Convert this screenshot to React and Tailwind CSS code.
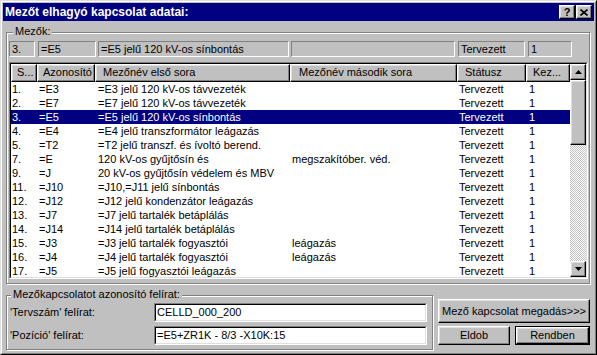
import React from 'react';

const raised =
  'border border-t-white border-l-white border-b-black border-r-black shadow-[inset_-1px_-1px_0_#808080,inset_1px_1px_0_#dfdfdf] bg-[#c0c0c0]';
const etched = 'border border-[#808080] shadow-[inset_1px_1px_0_#ffffff,1px_1px_0_#ffffff]';

const rows = [
  ['1.', '=E3', '=E3 jelű 120 kV-os távvezeték', ''],
  ['2.', '=E7', '=E7 jelű 120 kV-os távvezeték', ''],
  ['3.', '=E5', '=E5 jelű 120 kV-os sínbontás', ''],
  ['4.', '=E4', '=E4 jelű transzformátor leágazás', ''],
  ['5.', '=T2', '=T2 jelű transzf. és ívoltó berend.', ''],
  ['7.', '=E', '120 kV-os gyűjtősín és', 'megszakítóber. véd.'],
  ['9.', '=J', '20 kV-os gyűjtősín védelem és MBV', ''],
  ['11.', '=J10', '=J10,=J11 jelű sínbontás', ''],
  ['12.', '=J12', '=J12 jelű kondenzátor leágazás', ''],
  ['13.', '=J7', '=J7 jelű tartalék betáplálás', ''],
  ['14.', '=J14', '=J14 jelű tartalék betáplálás', ''],
  ['15.', '=J3', '=J3 jelű tartalék fogyasztói', 'leágazás'],
  ['16.', '=J4', '=J4 jelű tartalék fogyasztói', 'leágazás'],
  ['17.', '=J5', '=J5 jelű fogyasztói leágazás', ''],
];

const fields = [
  { w: 'w-[26px]', ml: 'ml-0', text: '3.' },
  { w: 'w-[58px]', ml: 'ml-[3px]', text: '=E5' },
  { w: 'w-[191px]', ml: 'ml-[2px]', text: '=E5 jelű 120 kV-os sínbontás' },
  { w: 'w-[164px]', ml: 'ml-[2px]', text: '' },
  { w: 'w-[67px]', ml: 'ml-[3px]', text: 'Tervezett' },
  { w: 'w-[44px]', ml: 'ml-[3px]', text: '1' },
];

const Arrow = ({ down }) => (
  <svg width="7" height="4" viewBox="0 0 7 4">
    <polygon points={down ? '0,0 7,0 3.5,4' : '0,4 7,4 3.5,0'} fill="#000" />
  </svg>
);

const Input = ({ value }) => (
  <div className="h-[19px] w-[273px] border border-t-[#808080] border-l-[#808080] border-b-white border-r-white">
    <div className="h-full border border-t-black border-l-black border-b-[#dfdfdf] border-r-[#dfdfdf] bg-white pl-px leading-[15px] whitespace-nowrap">
      {value}
    </div>
  </div>
);

export default function App() {
  return (
    <div className="h-[355px] w-[597px] bg-[#c0c0c0] font-['Liberation_Sans',Arial,sans-serif] text-[11px] text-black">
      <div className="h-full border border-t-[#dfdfdf] border-l-[#dfdfdf] border-b-black border-r-black">
        <div className="h-full border border-t-white border-l-white border-b-[#808080] border-r-[#808080] p-px">
          {/* title bar */}
          <div className="flex h-[18px] items-center bg-[#000080] pl-[2px] pr-[2px]">
            <span className="text-[12px] font-bold leading-[18px] text-white">Mezőt elhagyó kapcsolat adatai:</span>
            <div className="ml-auto flex gap-px">
              <div className={`flex h-[14px] w-[16px] items-center justify-center text-[11px] leading-none font-bold ${raised}`}>?</div>
              <div className={`flex h-[14px] w-[16px] items-center justify-center ${raised}`}>
                <svg width="8" height="7" viewBox="0 0 8 7">
                  <path d="M0.5 0.5 L7.5 6.5 M7.5 0.5 L0.5 6.5" stroke="#000" strokeWidth="1.6" />
                </svg>
              </div>
            </div>
          </div>

          {/* Mezők group */}
          <div className={`relative ml-[3px] mt-[11px] h-[252px] w-[584px] ${etched}`}>
            <span className="absolute left-[6px] top-[-8px] bg-[#c0c0c0] px-[2px] leading-[13px]">Mezők:</span>
            <div className="ml-[2px] mt-[8px] flex h-[16px]">
              {fields.map((f, i) => (
                <div
                  key={i}
                  className={`${f.w} ${f.ml} h-full border border-t-[#808080] border-l-[#808080] border-b-white border-r-white pl-[2px] leading-[14px] whitespace-nowrap overflow-hidden`}
                >
                  {f.text}
                </div>
              ))}
            </div>

            {/* list view */}
            <div className="ml-[2px] mt-[5px] h-[217px] w-[579px] border border-t-[#808080] border-l-[#808080] border-b-white border-r-white">
              <div className="flex h-full border border-t-black border-l-black border-b-[#dfdfdf] border-r-[#dfdfdf]">
                <div className="flex w-[559px] flex-col bg-white">
                  <div className="flex h-[18px] shrink-0 leading-[15px]">
                    <div className={`w-[26px] pl-[5px] ${raised}`}>S...</div>
                    <div className={`w-[58px] pl-[5px] ${raised}`}>Azonosító</div>
                    <div className={`w-[195px] pl-[7px] ${raised}`}>Mezőnév első sora</div>
                    <div className={`w-[167px] pl-[8px] ${raised}`}>Mezőnév második sora</div>
                    <div className={`w-[69px] pl-[7px] ${raised}`}>Státusz</div>
                    <div className={`w-[44px] pl-[6px] ${raised}`}>Kez...</div>
                  </div>
                  <div className="flex-1 overflow-hidden">
                    {rows.map((r, i) => (
                      <div
                        key={i}
                        className={`flex h-[14px] pt-px leading-[13px] whitespace-nowrap ${i === 2 ? 'bg-[#000080] text-white' : ''}`}
                      >
                        <div className="w-[26px] pl-px">{r[0]}</div>
                        <div className="w-[58px] pl-[2px]">{r[1]}</div>
                        <div className="w-[195px] pl-[3px]">{r[2]}</div>
                        <div className="w-[167px] pl-[2px]">{r[3]}</div>
                        <div className="w-[69px] pl-[2px]">Tervezett</div>
                        <div className="w-[44px] pl-[3px]">1</div>
                      </div>
                    ))}
                  </div>
                </div>
                {/* scrollbar */}
                <div className="flex w-[16px] flex-col">
                  <div className={`flex h-[16px] shrink-0 items-center justify-center ${raised}`}>
                    <Arrow />
                  </div>
                  <div className={`h-[65px] shrink-0 ${raised}`} />
                  <div className="flex-1 bg-[image:repeating-conic-gradient(#c0c0c0_0_25%,#ffffff_0_50%)] bg-[length:2px_2px]" />
                  <div className={`flex h-[16px] shrink-0 items-center justify-center ${raised}`}>
                    <Arrow down />
                  </div>
                </div>
              </div>
            </div>
          </div>

          {/* bottom area */}
          <div className="ml-[3px] mt-[11px] flex items-start">
            <div className={`relative h-[55px] w-[427px] ${etched}`}>
              <span className="absolute left-[4px] top-[-8px] bg-[#c0c0c0] px-[2px] leading-[13px]">
                Mezőkapcsolatot azonosító felírat:
              </span>
              <div className="mt-[7px] flex flex-col gap-[4px] pl-[3px]">
                <div className="flex items-center">
                  <span className="w-[144px]">'Tervszám' felírat:</span>
                  <Input value="CELLD_000_200" />
                </div>
                <div className="flex items-center">
                  <span className="w-[144px]">'Pozíció' felírat:</span>
                  <Input value="=E5+ZR1K - 8/3 -X10K:15" />
                </div>
              </div>
            </div>

            <div className="ml-[5px] mt-[4px] flex w-[152px] flex-col gap-[3px]">
              <div className={`flex h-[24px] items-center justify-center ${raised}`}>Mező kapcsolat megadás&gt;&gt;&gt;</div>
              <div className="flex h-[19px]">
                <div className={`flex w-[72px] items-center justify-center ${raised}`}>Eldob</div>
                <div className="ml-auto w-[75px] border border-black">
                  <div className={`flex h-full items-center justify-center ${raised}`}>Rendben</div>
                </div>
              </div>
            </div>
          </div>
        </div>
      </div>
    </div>
  );
}
